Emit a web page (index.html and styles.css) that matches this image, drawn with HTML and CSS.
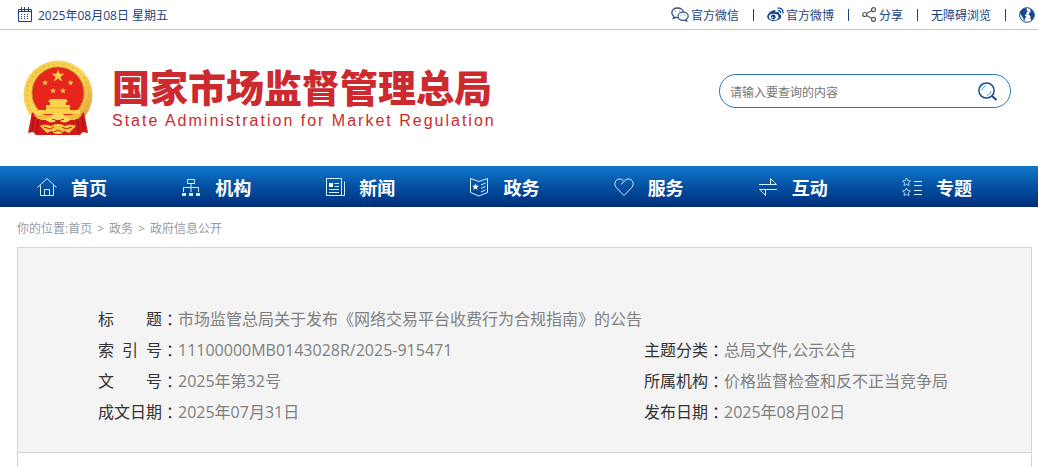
FILE: index.html
```
<!DOCTYPE html>
<html lang="zh-CN">
<head>
    <meta charset="utf-8">
    <title>国家市场监督管理总局</title>
    <link rel="stylesheet" href="styles.css">
</head>
<body>
    <div class="topbar">
        <div class="date">
            <svg width="14" height="15" viewBox="0 0 14 15" fill="none" stroke="#1d3f82">
                <path d="M.5 2.500h13v12H.5zM1 4.500h12" />
                <path d="M3.500 0v4M6.500 0v4M10.500 0v4" />
                <path d="M3 7.500h9M3 9.500h9M3 11.500h9" stroke-dasharray="1 2" />
            </svg>
            <span>2025年08月08日 星期五</span>
        </div>
        <ul class="top-links">
            <li><a href="#">
                <svg width="18" height="15" viewBox="0 0 18 15" fill="#fff" stroke="#35568c" stroke-width="1.3">
                    <path d="M6.500 1C3.200 1 .8 3 .8 5.700c0 1.600.8 2.900 2.100 3.700L2.300 11.500l2.400-1.200c3.800 1 7.800-1.300 7.800-4.600C12.500 3 9.800 1 6.500 1z" />
                    <path d="M12 5.200c-2.800 0-5 1.800-5 4.100s2.200 4.100 5 4.100c.6 0 1.200-.1 1.800-.3l1.900 1-.5-1.700c1.200-.7 2-1.800 2-3.100 0-2.300-2.400-4.100-5.200-4.100z" />
                    <path d="M4.300 4.200h.6M8.200 4.200h.6M9.800 8.200h.6M13.600 8.200h.6" />
                </svg>官方微信</a></li>
            <li><a href="#">
                <svg width="17" height="15" viewBox="0 0 17 15" fill="#16488f">
                    <path d="M6.500 3.200C3.600 4 .2 7 .2 9.700c0 2.600 3.200 4.300 6.600 4.300 4.400 0 7.500-2.400 7.500-4.700 0-1.400-1.200-2-2.200-2.300.6-1.700-.6-2.600-3.700-1.500.6-1.600-.1-2.700-1.900-2.300z" />
                    <ellipse cx="6.700" cy="9.900" rx="4.800" ry="3.100" fill="#fff" />
                    <circle cx="6.300" cy="10" r="2.400" />
                    <circle cx="5.500" cy="10.500" r=".8" fill="#fff" />
                    <path d="M10.500 1.200c3.400-.8 6.200 1.800 5.300 5.300M11 3.600c1.800-.3 3 1 2.500 2.600" fill="none" stroke="#16488f" stroke-width="1.3" />
                </svg>官方微博</a></li>
            <li><a href="#">
                <svg width="15" height="15" viewBox="0 0 15 15" fill="none" stroke="#555" stroke-width="1.2">
                    <circle cx="2.800" cy="7.500" r="2" />
                    <circle cx="11.500" cy="2.700" r="2" />
                    <circle cx="11.500" cy="12.300" r="2" />
                    <path d="M4.600 6.500l5.100-2.800M4.600 8.500l5.100 2.800" />
                </svg>分享</a></li>
            <li><a href="#">无障碍浏览</a></li>
            <li><a href="#" aria-label="English">
                <svg width="16" height="16" viewBox="0 0 16 16">
                    <circle cx="8" cy="8" r="7.300" fill="#fff" stroke="#16488f" />
                    <path d="M2 3.500L5 1.200l3 .4-.5 1.800L9 4.500 7.200 6l.3 1.500L5.500 8l1.800 1.500L6 11.500l-.8 3L4 11 2.500 8.500.8 6z" fill="#16488f" />
                    <path d="M10.500 2.500l2.500.3L15.300 7l-.5 3.500-2.300 2.800-1.300-1.800.3-2.300-2-1.700 1-2 1.500-.5z" fill="#16488f" />
                </svg></a></li>
        </ul>
    </div>

    <header class="header">
        <a class="logo" href="#">
            <svg width="72" height="76" viewBox="0 0 72 76">
                <defs>
                    <linearGradient id="gold" x1="0" y1="0" x2="1" y2="1">
                        <stop offset="0" stop-color="#f6c944" />
                        <stop offset=".5" stop-color="#fbd95c" />
                        <stop offset="1" stop-color="#dc9c2e" />
                    </linearGradient>
                </defs>
                <circle cx="36" cy="35" r="34.500" fill="url(#gold)" />
                <circle cx="36" cy="35" r="31" fill="none" stroke="#d99b2b" stroke-width="1.5" stroke-dasharray="3 2" opacity=".4" />
                <circle cx="36" cy="33" r="26" fill="#e6261c" stroke="#c98a22" />
                <g fill="#fbd24a">
                    <path id="star" d="M36 9l1.500 4.800h5l-4 3 1.500 4.800-4-3-4 3 1.500-4.800-4-3h5z" />
                    <use href="#star" transform="translate(6.500 15.500) scale(.46)" />
                    <use href="#star" transform="translate(32 15.500) scale(.46)" />
                    <use href="#star" transform="translate(14.500 23.500) scale(.46)" />
                    <use href="#star" transform="translate(24.500 23.500) scale(.46)" />
                    <path d="M28 39h16l2 3H26zM28 42h16v3H28zM24 45h24v7H24zM14 50h44v4H14z" />
                </g>
                <path d="M24 48h24" stroke="#e9a52d" />
                <path d="M10 52L6 73l5-1 3 3h44l3-3 5 1-4-21-9 8H19z" fill="#d3191b" />
                <path d="M12 57l-2 13M16 60l-1 13M60 57l2 13M56 60l1 13" stroke="#981111" fill="none" />
                <path d="M12 55h48l-4 4H16z" fill="#f0bb3b" />
                <path d="M23 59l6-2 2-3h10l2 3 6 2c-2 3-6 4-9 3l-4-2-4 2c-3 1-7 0-9-3z" fill="#fbd95c" />
                <path d="M18 66c5-2 8-1 11 0l4-2h6l4 2c3-1 6-2 11 0l-7 7-5-2-3 3h-6l-3-3-5 2z" fill="#f7c746" />
                <path d="M30 59l6 2 6-2M22 67l6 2 4-2M50 67l-6 2-4-2M32 72l4-2 4 2" stroke="#c9241a" fill="none" />
            </svg>
            <span class="logo-text">
                <strong>国家市场监督管理总局</strong>
                <span class="logo-en">State Administration for Market Regulation</span>
            </span>
        </a>
        <form class="search">
            <input type="text" aria-label="搜索" placeholder="请输入要查询的内容">
            <button type="button" aria-label="查询">
                <svg width="19" height="19" viewBox="0 0 19 19" fill="none" stroke="#174b92" stroke-width="1.5">
                    <circle cx="8.500" cy="8.500" r="7.600" />
                    <path d="M14 14l4.500 4" stroke-width="2" />
                    <path d="M4 8.500C4 6 6 4 8 4M13 9c0 2-2 4-4 4" stroke="#3c91cb" stroke-width="1" />
                </svg>
            </button>
        </form>
    </header>

    <nav class="nav">
        <a href="#">
            <svg viewBox="0 0 20 20"><path d="M.5 10.500L10 1.500l9.500 9M3.500 8.500v10h13v-10M7.500 18.500v-6h5v6" /></svg>
            首页</a>
        <a href="#">
            <svg viewBox="0 0 20 20"><path d="M6.500 2.500h7v4h-7zM10 6.500v4M2.500 15v-4.500h15V15M10 10.500V15" /><path d="M1 17.500h4M8 17.500h4M15 17.500h4" stroke-width="3" /></svg>
            机构</a>
        <a href="#">
            <svg viewBox="0 0 20 20"><path d="M16.500 18.500h-15v-17h15v17h3V4.500M9.500 6.500H14M9.500 9.500H14M4 12.500h10M4 15.500h10" /><path d="M4 6h4v4H4z" fill="#fff" stroke="none" /></svg>
            新闻</a>
        <a href="#">
            <svg viewBox="0 0 20 20"><path d="M1.500 1.500L10 4.500l8.500-3v14L10 19l-8.500-3.500zM12 8l4.500-2M12 11.500l4.500-2M12 15l4.500-2" /><path d="M6.500 6.500l1 2.300h2.300L8 10.400l.7 2.400-2.200-1.400-2.200 1.400.7-2.400-1.800-1.600h2.300z" fill="#fff" stroke="none" /></svg>
            政务</a>
        <a href="#">
            <svg viewBox="0 0 20 20"><path d="M10 18.500L2.500 10.800C-1 7 1.500 2 5.500 2 8 2 9 3.200 10 4.500 11 3.200 12 2 14.500 2c4 0 6.500 5 3 8.800zM10 4.500L7 7.500" /></svg>
            服务</a>
        <a href="#">
            <svg viewBox="0 0 20 20"><path d="M1 7.500h17.500L12.500 1.500v6M19 12.500H1.500l6 6v-6" /></svg>
            互动</a>
        <a href="#">
            <svg viewBox="0 0 20 20"><path id="outline-star" d="M4.500 1l1.200 2.500 2.800.4-2 2 .5 2.800-2.500-1.400L2 8.700l.5-2.800-2-2 2.800-.4z" stroke-width=".8" /><use href="#outline-star" y="10" /><path d="M12 4.500h8M12 8.500h8M12 13.500h8M12 17.500h8" /></svg>
            专题</a>
    </nav>

    <main class="container">
        <div class="breadcrumb">你的位置:<a href="#">首页</a><span>&gt;</span><a href="#">政务</a><span>&gt;</span><a href="#">政府信息公开</a></div>

        <div class="article">
            <dl class="info">
                <div class="wide">
                    <dt><span class="name">标 题</span><span class="colon">：</span></dt>
                    <dd>市场监管总局关于发布《网络交易平台收费行为合规指南》的公告</dd>
                </div>
                <div>
                    <dt><span class="name">索 引 号</span><span class="colon">：</span></dt>
                    <dd>11100000MB0143028R/2025-915471</dd>
                </div>
                <div>
                    <dt><span class="name">主题分类</span><span class="colon">：</span></dt>
                    <dd>总局文件,公示公告</dd>
                </div>
                <div>
                    <dt><span class="name">文 号</span><span class="colon">：</span></dt>
                    <dd>2025年第32号</dd>
                </div>
                <div>
                    <dt><span class="name">所属机构</span><span class="colon">：</span></dt>
                    <dd>价格监督检查和反不正当竞争局</dd>
                </div>
                <div>
                    <dt><span class="name">成文日期</span><span class="colon">：</span></dt>
                    <dd>2025年07月31日</dd>
                </div>
                <div>
                    <dt><span class="name">发布日期</span><span class="colon">：</span></dt>
                    <dd>2025年08月02日</dd>
                </div>
            </dl>
        </div>
    </main>
</body>
</html>
```
FILE: styles.css
```
* {
    box-sizing: border-box;
}
body {
    margin: 0;
    min-height: 100vh;
    display: flex;
    flex-direction: column;
    font-family: "Open Sans", "Noto Sans CJK SC", sans-serif;
    font-size: 12px;
    background-color: #fff;
}
a {
    color: inherit;
    text-decoration: none;
}
svg {
    display: block;
    flex: none;
}
.topbar {
    display: flex;
    justify-content: space-between;
    align-items: center;
    height: 30px;
    padding: 0 3px 0 18px;
    color: #1d3f82;
    border-bottom: 1px solid #c5cac6;
}
.date {
    display: flex;
    align-items: center;
    gap: 6px;
}
.top-links {
    display: flex;
    margin: 0;
    padding: 0;
    list-style: none;
}
.top-links li {
    display: flex;
    align-items: center;
}
.top-links li + li::before {
    content: "";
    width: 1px;
    height: 12px;
    margin: 0 13px 0 14px;
    background-color: #1d3f82;
}
.top-links a {
    display: flex;
    align-items: center;
    gap: 2px;
}
.header {
    display: flex;
    justify-content: space-between;
    align-items: center;
    height: 136px;
    padding: 0 27px 0 22px;
}
.logo {
    display: flex;
    align-items: center;
    gap: 18px;
    color: #cc2a2e;
}
.logo-text {
    display: flex;
    flex-direction: column;
}
.logo strong {
    font-family: "Noto Sans CJK SC", sans-serif;
    font-size: 38px;
    font-weight: 900;
    line-height: 46px;
}
.logo-en {
    font-family: "Liberation Sans", Arial, sans-serif;
    font-size: 16px;
    line-height: 24px;
    letter-spacing: 2px;
}
.search {
    display: flex;
    align-items: center;
    width: 292px;
    height: 34px;
    margin-bottom: 14px;
    padding: 0 13px 0 10px;
    border: 1px solid #2a78b8;
    border-radius: 17px;
}
.search input {
    flex: 1;
    min-width: 0;
    padding: 2px 0 0;
    border: 0;
    outline: 0;
    font: inherit;
    background: none;
}
.search input::placeholder {
    color: #757575;
}
.search button {
    padding: 0;
    border: 0;
    background: none;
    cursor: pointer;
}
.nav {
    display: grid;
    grid-template-columns: repeat(7, 1fr);
    height: 41px;
    padding-right: 29px;
    background: linear-gradient(#1178c9, #0450a2 50%, #003584 90%, #002a68);
}
.nav a {
    display: flex;
    justify-content: center;
    align-items: center;
    gap: 14px;
    color: #fff;
    font-size: 18px;
    font-weight: bold;
}
.nav svg {
    width: 20px;
    height: 20px;
    fill: none;
    stroke: #d8f1ff;
}
.container {
    flex: 1;
    display: flex;
    flex-direction: column;
    padding: 0 6px 0 17px;
}
.breadcrumb {
    height: 40px;
    line-height: 44px;
    color: #999ca6;
}
.breadcrumb span {
    margin: 0 5px;
}
.article {
    flex: 1;
    border: 1px solid #d3d3dc;
    border-bottom: 0;
}
.info {
    display: grid;
    grid-template-columns: 546fr 387fr;
    margin: 0;
    padding: 56px 0 24px 80px;
    font-size: 16px;
    line-height: 31px;
    background-color: #f4f4f4;
    border-bottom: 1px solid #d3d3dc;
}
.info div {
    display: flex;
    height: 31px;
}
.info .wide {
    grid-column: 1 / -1;
}
.info dt {
    display: flex;
    flex: none;
    width: 80px;
    color: #333;
}
.info dd {
    margin: 0;
    color: #808080;
    white-space: nowrap;
}
.name {
    width: 64px;
    white-space: nowrap;
    text-align-last: justify;
}
.colon {
    font-family: "Noto Sans CJK TC", sans-serif;
}
```
